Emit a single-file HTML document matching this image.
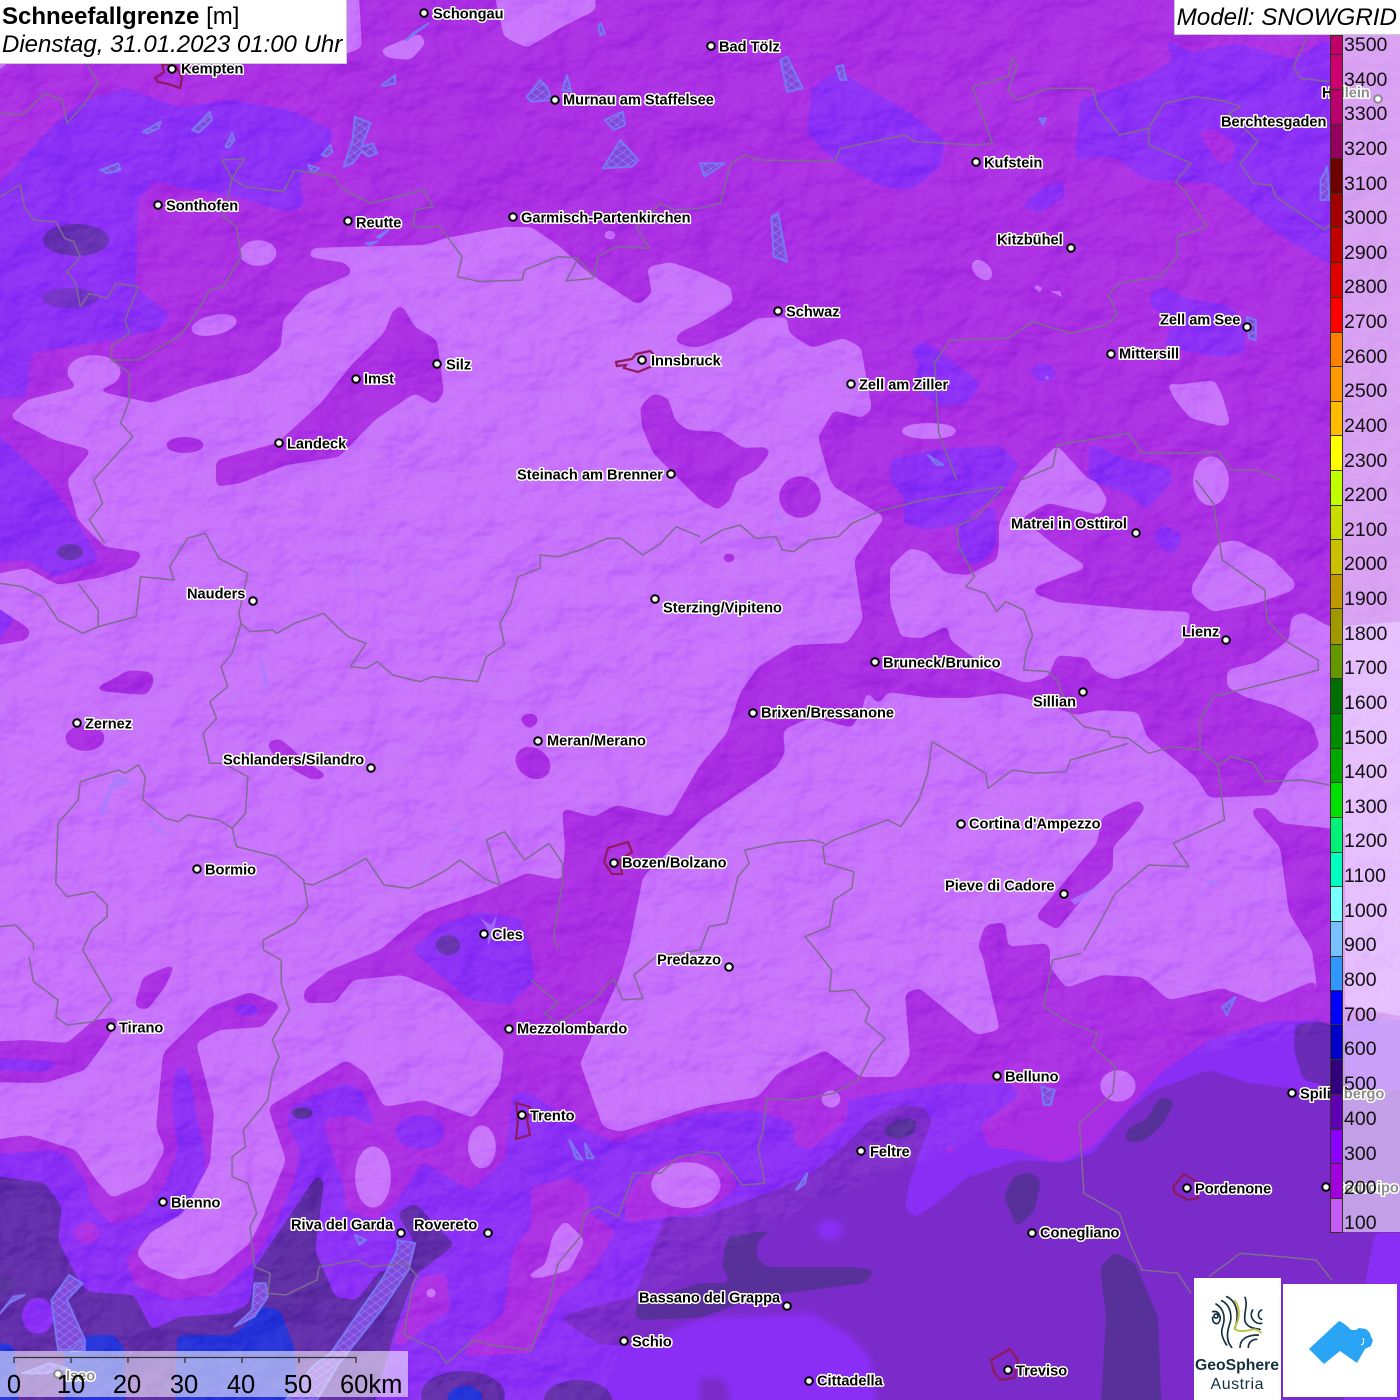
<!DOCTYPE html>
<html><head><meta charset="utf-8"><title>Schneefallgrenze</title>
<style>
html,body{margin:0;padding:0;background:#a92de3}
#w{position:relative;width:1400px;height:1400px;overflow:hidden;font-family:"Liberation Sans",sans-serif}
svg{position:absolute;left:0;top:0}
.c text{font:bold 14.6px "Liberation Sans",sans-serif;fill:#000;stroke:#fff;stroke-width:3px;paint-order:stroke;stroke-linejoin:round}
.d circle{fill:#fff;stroke:#000;stroke-width:2}
.b polyline{fill:none;stroke:#7d6d90;stroke-width:1.5;vector-effect:non-scaling-stroke;stroke-linejoin:round}
.k polygon{fill:url(#h);stroke:#7a78f2;stroke-width:2;vector-effect:non-scaling-stroke;stroke-linejoin:round}
.r polyline,.r polygon{fill:none;stroke:#8f1a5e;stroke-width:2.2;stroke-linejoin:miter}
.leg{position:absolute;left:1344px;font-size:19.5px;line-height:22px;color:#111;height:22px}
.cell{position:absolute;left:1330px;width:13px;box-sizing:border-box;border:1px solid #332;border-bottom:0}
.hd{position:absolute;background:#fff;color:#000;white-space:nowrap}
.sc{position:absolute;top:1370px;font-size:25.5px;line-height:30px;color:#000;transform:translateX(-50%)}
</style></head><body><div id="w">
<svg width="1400" height="1400" viewBox="0 0 1400 1400">
<defs>
<pattern id="h" width="17" height="17" patternUnits="userSpaceOnUse" patternTransform="rotate(45)"><rect width="17" height="17" fill="#7f4bdc"/><path d="M0 0H17M0 0V17" stroke="#b9a2ff" stroke-width="2"/></pattern>
<filter id="t" x="0" y="0" width="1" height="1" color-interpolation-filters="sRGB"><feTurbulence type="fractalNoise" baseFrequency=".016 .022" numOctaves="4" seed="7"/><feDiffuseLighting surfaceScale="11" diffuseConstant=".66" lighting-color="#fff"><feDistantLight azimuth="225" elevation="60"/></feDiffuseLighting></filter>
<filter id="s" filterUnits="userSpaceOnUse" x="-30" y="-30" width="1460" height="1460" color-interpolation-filters="sRGB"><feGaussianBlur stdDeviation="3.5"/><feComponentTransfer><feFuncA type="linear" slope="16" intercept="-7.5"/></feComponentTransfer></filter>
<clipPath id="cp"><polygon points="0,0 1400,0 1400,1020 1160,1060 1000,1130 800,1210 640,1300 600,1400 0,1400"/></clipPath>
</defs>
<rect width="1400" height="1400" fill="#a92de3"/>

<!-- blue-purple areas -->
<g fill="#8a2ef5" filter="url(#s)">
<polygon points="-20,205 0,183 45,133 80,103 125,88 179,107 232,100 290,110 333,130 330,150 308,170 300,177 304,207 286,212 237,197 179,187 156,180 138,200 136,287 172,317 156,330 112,340 31,353 27,397 -20,400"/>
<polygon points="-20,420 0,437 47,480 74,517 100,560 54,577 27,560 -20,563"/>
<polygon points="-20,590 0,600 14,620 0,640 -20,645"/>
<polygon points="812,87 838,70 865,87 910,113 945,140 941,167 910,190 883,187 834,160 807,133"/>
<polygon points="1164,37 1191,53 1236,43 1294,60 1330,37 1345,273 1276,233 1236,200 1213,183 1146,180 1115,157 1075,160 1080,100 1146,77 1173,60"/>
<polygon points="1021,207 1039,190 1062,180 1066,197 1039,213"/>
<polygon points="1149,293 1164,287 1191,300 1227,305 1245,320 1245,353 1218,357 1164,347 1173,320 1151,307"/>
<polygon points="910,350 923,340 941,353 981,383 968,403 941,407 914,387 919,363"/>
<polygon points="1028,370 1044,362 1057,370 1053,380 1039,382"/>
<polygon points="890,460 930,450 1000,445 1020,465 1000,495 960,520 958,555 975,565 990,555 997,540 995,505 980,515 955,525 925,530 903,523 905,500 890,480"/>
<polygon points="1089,443 1129,460 1169,467 1173,480 1147,510 1130,495 1089,480"/>
<polygon points="1153,537 1164,523 1184,537 1173,555 1160,548"/>
<polygon points="411,950 440,925 480,912 520,918 531,950 535,980 510,1005 470,1000 440,975"/>
<polygon points="-20,1057 40,1060 60,1063 45,1072 -20,1070"/>
<ellipse cx="247" cy="1010" rx="13" ry="6"/>
<polygon points="-20,1155 50,1150 67,1155 85,1180 92,1205 112,1225 140,1215 165,1185 178,1150 172,1110 175,1070 183,1063 192,1085 197,1120 205,1150 205,1175 185,1215 145,1240 125,1260 135,1285 170,1300 215,1295 250,1265 270,1235 295,1180 300,1150 287,1125 290,1107 344,1083 362,1090 380,1135 420,1160 470,1190 505,1160 513,1093 529,1092 580,1127 616,1143 700,1113 754,1110 800,1125 848,1100 900,1090 950,1083 1010,1083 1020,1095 980,1125 987,1147 1015,1150 1057,1163 1093,1147 1124,1113 1164,1070 1210,1040 1270,1022 1330,1020 1420,1020 1420,1420 -20,1420"/>
</g>
<g fill="#a92de3" filter="url(#s)">
<polygon points="1198,133 1213,128 1236,143 1231,163 1218,163"/>
<polygon points="324,1120 350,1115 370,1125 385,1107 424,1100 473,1120 505,1110 505,1160 470,1190 450,1160 420,1165 395,1205 375,1220 345,1210 345,1190 325,1130"/>
<polygon points="531,1187 571,1177 589,1190 589,1213 616,1230 594,1270 558,1300 531,1353 464,1357 469,1340 504,1313 513,1250 531,1227"/>
<polygon points="625,1200 638,1177 670,1160 700,1153 727,1163 738,1187 722,1200 700,1213 625,1223"/>
<polygon points="393,1343 420,1277 446,1273 451,1310 424,1327 402,1347"/>
<polygon points="794,1097 848,1090 847,1120 810,1150 794,1145"/>
<circle cx="950" cy="1150" r="5"/>
<ellipse cx="87" cy="1233" rx="13" ry="11"/>
</g>
<ellipse cx="420" cy="1132" rx="24" ry="17" fill="#8a2ef5"/>

<!-- plain -->
<g filter="url(#s)">
<polygon fill="#7b2bc9" points="1420,1090 1305,1090 1249,1083 1209,1070 1155,1090 1129,1110 1093,1153 1062,1163 1021,1160 968,1177 937,1203 914,1218 905,1207 910,1180 932,1120 923,1107 901,1105 870,1120 847,1143 812,1173 776,1190 700,1217 665,1217 634,1297 607,1303 558,1317 600,1345 640,1345 647,1420 1340,1420 1365,1285 1375,1233 1420,1233"/>
<polygon fill="#8a2ef5" points="640,1345 700,1318 812,1313 847,1333 870,1357 879,1420 647,1420"/>
<polygon fill="#7b2bc9" points="700,1377 725,1380 735,1420 700,1420"/>
<polygon fill="#6a2cb6" points="1295,1025 1330,1020 1345,1030 1345,1090 1303,1080 1294,1050"/>
<ellipse cx="830" cy="1230" rx="13" ry="10" fill="#8a2ef5"/>
</g>

<!-- dark -->
<g filter="url(#s)">
<polygon fill="#5f2ba8" points="-20,1177 2,1177 45,1183 62,1207 58,1240 80,1283 89,1292 134,1295 152,1330 179,1317 232,1313 250,1303 255,1267 317,1175 324,1183 315,1250 335,1297 357,1300 379,1272 400,1267 415,1243 397,1213 415,1203 455,1245 415,1275 395,1330 370,1420 -20,1420"/>
<polygon fill="#5a2aa0" points="270,1267 320,1175 324,1183 315,1250 335,1297 300,1305 262,1306"/>
</g>
<g fill="#57309a" filter="url(#s)">
<polygon points="880,1132 896,1120 917,1118 915,1133 897,1140"/>
<polygon points="1124,1140 1129,1127 1146,1120 1160,1097 1175,1100 1164,1123 1146,1140 1133,1143"/>
<polygon points="1004,1197 1013,1177 1030,1172 1041,1180 1035,1210 1017,1228"/>
<polygon points="1100,1267 1115,1252 1135,1263 1158,1317 1162,1420 1100,1420 1106,1317"/>
<polygon points="636,1303 700,1283 731,1283 722,1267 727,1237 780,1228 758,1240 756,1257 767,1267 852,1267 876,1270 865,1283 758,1297 700,1318 636,1320"/>
<ellipse cx="302" cy="1113" rx="12" ry="6"/>
<ellipse cx="4" cy="1285" rx="10" ry="9"/>
</g>
<g fill="#57309a">
<ellipse cx="76" cy="240" rx="33" ry="16" opacity=".75"/>
<ellipse cx="70" cy="298" rx="28" ry="10" opacity=".5"/>
<ellipse cx="70" cy="552" rx="13" ry="8" opacity=".8"/>
<ellipse cx="448" cy="945" rx="12" ry="10" opacity=".8"/>
</g>
<ellipse cx="463" cy="1395" rx="42" ry="24" fill="#5f2ba8"/>
<ellipse cx="465" cy="1398" rx="17" ry="12" fill="#1f2fd8"/>
<ellipse cx="578" cy="1400" rx="34" ry="20" fill="#5f2ba8"/>
<ellipse cx="38" cy="1316" rx="16" ry="18" fill="#8a2ef5"/>
<g fill="#2330d8" filter="url(#s)">
<polygon points="175,1420 177,1335 235,1335 262,1306 280,1310 295,1350 297,1420"/>
<polygon points="65,1345 90,1335 115,1335 125,1350 125,1420 65,1420"/>
<polygon points="-20,1340 14,1345 20,1420 -20,1420"/>
</g>

<!-- main light -->
<g fill="#c670fb" filter="url(#s)">
<polygon points="9,417 27,400 78,387 152,403 192,388 250,373 281,347 283,320 308,293 353,273 346,263 308,257 312,248 344,247 424,245 446,238 504,227 531,227 558,245 589,273 638,305 652,293 647,267 670,262 700,272 731,287 733,303 700,323 680,332 674,342 690,347 700,347 730,335 758,318 787,317 789,333 812,348 843,338 861,347 872,410 861,418 834,410 818,437 830,480 834,487 885,517 854,560 863,620 847,643 794,645 758,667 740,693 727,733 700,765 670,817 616,805 594,817 562,808 565,847 562,880 527,873 482,893 424,913 380,950 330,970 304,990 304,1003 335,1003 353,980 402,975 446,993 504,1050 500,1083 473,1118 424,1100 384,1107 366,1073 346,1060 268,1107 286,1160 263,1217 250,1243 214,1273 179,1280 147,1267 136,1253 150,1233 183,1213 210,1163 214,1113 196,1043 219,1030 263,1027 281,1005 250,992 210,1007 163,1053 156,1127 165,1150 147,1183 112,1198 96,1180 76,1150 27,1135 -20,1142 -20,1082 45,1083 85,1070 107,1040 120,1017 94,1020 67,1043 27,1040 -20,1042 -20,648 27,640 31,630 -20,596 -20,577 27,568 58,585 103,577 134,567 143,552 105,547 78,520 67,480 92,450 54,440"/>
<polygon points="700,820 776,768 785,753 783,730 812,717 852,728 862,710 867,690 878,705 888,692 932,698 968,698 1004,693 1044,703 1075,715 1102,710 1138,712 1147,737 1196,777 1209,798 1276,795 1289,770 1320,747 1312,723 1280,707 1245,697 1227,687 1227,670 1258,662 1289,640 1291,617 1303,612 1330,627 1420,620 1420,1020 1316,1000 1316,980 1262,1003 1222,988 1169,1000 1142,977 1102,975 1066,988 1050,967 1050,950 1048,943 1008,947 1005,922 985,925 977,950 981,950 1000,1030 977,1035 919,988 905,993 910,1057 896,1077 861,1077 825,1050 778,1073 758,1097 700,1107 620,1132 603,1127 580,1063 620,977 629,947 643,877"/>
<polygon points="890,567 910,548 928,553 945,573 968,575 997,560 999,543 999,523 1021,480 1057,445 1089,480 1095,480 1108,500 1100,515 1048,503 1021,518 1057,547 1088,567 1035,587 1033,593 1057,602 1146,610 1191,612 1184,643 1146,670 1115,680 1093,670 1088,658 1057,655 1048,677 1026,683 990,670 950,640 948,625 923,638 901,637 890,603"/>
<polygon points="1191,587 1218,543 1236,540 1271,557 1296,583 1294,590 1258,603 1213,612 1193,597"/>
<polygon points="491,-20 504,37 527,48 562,27 596,10 594,-20"/>
<polygon points="379,50 420,33 426,43 411,60 388,58"/>
<polygon points="340,-20 358,-20 362,48 340,56"/>
<polygon points="-20,60 14,60 -20,82"/>
<polygon points="1165,380 1175,385 1215,380 1222,395 1231,425 1220,426 1190,418 1175,400"/>
<polygon points="522,1278 545,1265 553,1235 565,1220 580,1235 585,1240 570,1270 540,1278"/>
<ellipse cx="258" cy="253" rx="19" ry="13"/>
<ellipse cx="214" cy="325" rx="24" ry="10" transform="rotate(-12 214 325)"/>
<ellipse cx="94" cy="372" rx="27" ry="17"/>
<ellipse cx="610" cy="235" rx="7" ry="5"/>
<ellipse cx="982" cy="270" rx="13" ry="8" transform="rotate(45 982 270)"/>
<ellipse cx="929" cy="431" rx="29" ry="8"/>
<ellipse cx="1211" cy="481" rx="18" ry="25"/>
<ellipse cx="482" cy="1147" rx="14" ry="22"/>
<ellipse cx="373" cy="1177" rx="18" ry="31"/>
<ellipse cx="686" cy="1185" rx="35" ry="23"/>
<ellipse cx="831" cy="1099" rx="10" ry="9"/>
<ellipse cx="1118" cy="1086" rx="18" ry="16"/>
</g>
<g fill="#c670fb">
<circle cx="431" cy="1293" r="4.5"/>
<polygon points="1037,285 1042,288 1040,292 1034,288"/>
<polygon points="1050,291 1060,291 1062,297"/>
</g>
<!-- mid-tone over light -->
<g fill="#a92de3" filter="url(#s)">
<polygon points="402,305 415,327 437,340 444,393 435,405 415,393 375,420 339,457 286,465 241,483 216,487 216,460 277,443 321,403 353,363 384,333 393,310"/>
<ellipse cx="185" cy="445" rx="20" ry="8"/>
<polygon points="640,407 653,393 668,398 675,420 687,430 720,432 743,448 768,447 770,453 757,470 737,480 730,500 718,510 700,500 683,483 653,453 642,427"/>
<ellipse cx="800" cy="497" rx="21" ry="21" transform="rotate(30 800 497)"/>
<ellipse cx="729" cy="558" rx="7" ry="5"/>
<polygon points="92,690 129,670 152,672 154,683 147,695 120,693"/>
<ellipse cx="85" cy="738" rx="20" ry="13"/>
<polygon points="266,743 279,738 290,747 308,763 330,777 312,780 299,773 277,760"/>
<polygon points="518,718 529,713 538,715 538,723 529,730"/>
<ellipse cx="533" cy="763" rx="19" ry="15" transform="rotate(35 533 763)"/>
<polygon points="134,1007 143,977 176,963 165,987 147,1010"/>
<polygon points="1035,917 1097,843 1102,817 1138,800 1146,807 1129,830 1113,847 1113,870 1084,897 1057,930"/>
<polygon points="1251,808 1267,808 1280,823 1345,830 1345,1030 1316,1020 1316,980 1312,950 1289,913 1280,847 1254,817"/>
</g>

<!-- hillshade -->
<rect width="1400" height="1400" filter="url(#t)" clip-path="url(#cp)" style="mix-blend-mode:soft-light" opacity=".5"/>

<!-- lakes -->
<g class="k" transform="scale(.4464 .3333)">
<polygon points="320,395 360,365 355,385 330,400"/><polygon points="430,390 470,335 475,360 445,398"/><polygon points="505,440 520,400 525,420 512,443"/><polygon points="225,510 265,490 270,510 240,520"/><polygon points="855,255 885,225 885,250 860,258"/><polygon points="720,465 740,435 745,455 730,470"/><polygon points="690,495 715,505 700,520"/>
<polygon points="770,500 790,420 795,350 830,370 810,440 835,430 845,460 825,470 810,455 790,490"/>
<polygon points="1180,290 1210,240 1225,260 1235,300 1190,305"/><polygon points="1260,270 1270,225 1280,275"/><polygon points="1355,360 1395,335 1400,375 1375,390"/><polygon points="1350,505 1390,420 1430,480 1415,500"/><polygon points="1340,80 1345,70 1355,100 1345,105"/><polygon points="910,120 960,70 925,100"/>
<polygon points="820,730 845,725 830,735"/><polygon points="845,710 870,690 850,715"/>
</g>
<g class="k" transform="translate(700 0) scale(.4464 .3333)">
<polygon points="180,180 195,170 230,265 195,275"/><polygon points="305,200 320,195 328,240 315,240"/><polygon points="160,650 175,640 195,785 165,770"/><polygon points="1390,540 1405,500 1410,600 1390,600"/><polygon points="760,355 775,355 768,375"/><polygon points="0,490 55,490 10,530"/><polygon points="1225,950 1245,960 1245,1020 1230,1015"/><polygon points="510,1365 545,1395 530,1395"/>
</g>
<g class="k" transform="translate(0 950) scale(.4464 .3333)">
<polygon points="115,1050 155,975 185,1000 150,1050 190,1170 190,1200 130,1200"/>
<polygon points="180,1170 190,1200 160,1205"/>
<polygon points="525,1130 565,1080 570,1000 595,1000 600,1040 570,1100"/>
<polygon points="640,1350 700,1250 740,1210 860,980 890,900 890,870 930,880 915,960 860,1070 760,1240 710,1350"/>
<polygon points="1275,570 1305,630 1290,625"/><polygon points="1310,580 1330,625 1315,625"/>
<polygon points="0,1090 30,1040 55,1035 20,1060"/>
<polygon points="795,855 820,870 805,885"/>
<polygon points="50,1270 110,1240 150,1255 100,1270"/>
</g>
<g class="k" transform="translate(700 950) scale(.4464 .3333)">
<polygon points="765,410 795,420 785,465 770,465"/><polygon points="215,720 240,670 235,700"/><polygon points="1170,170 1200,140 1180,195"/>
</g>
<g fill="#a97cff" opacity=".75">
<polygon points="258,645 268,680 266,695 261,670"/><polygon points="355,560 358,560 356,590"/><polygon points="98,813 116,773 134,782 112,790 105,815"/><polygon points="145,818 174,838 156,830"/><polygon points="451,830 464,825 455,833"/><polygon points="1110,880 1096,890 1075,905 1070,900"/><polygon points="480,918 491,925 497,915 493,935 488,945 487,928"/><polygon points="775,505 785,525 777,520"/><polygon points="1203,880 1222,882 1212,886"/><polygon points="1045,375 1050,378 1046,380"/>
</g>

<!-- borders -->
<g class="b" transform="scale(.4464 .3333)">
<polyline points="0,590 45,555 55,620 75,660 125,665 145,715 165,725 180,770 150,815 170,850 180,920 200,880 240,895 260,850 310,860 280,960 290,1000 250,1040 250,1080 310,1080 400,1010 430,960 470,870 500,860 540,770 530,680 500,650 520,535 497,480 548,475 520,535 550,560 635,575 660,510 750,530 760,560 830,610 950,570 970,620 930,630 925,680 985,680 1035,770 1025,830 1075,845 1170,840 1175,810 1250,770 1295,775 1330,830 1340,770 1380,740 1455,745 1425,680 1480,610 1510,630 1568,625"/>
<polyline points="1295,775 1268,843 1330,835"/>
<polyline points="250,1080 290,1120 290,1200 270,1270 298,1310 250,1380 210,1440"/>
<polyline points="195,195 220,250 190,310 150,370 140,300 100,280 50,345 0,340"/>
</g>
<g class="b" transform="translate(700 0) scale(.4464 .3333)">
<polyline points="0,625 45,610 70,490 100,465 130,480 300,485 315,445 460,405 480,425 620,435 655,430 610,260 690,230 700,175 710,200 690,270 710,300 780,265 880,265 890,320 940,405 1005,385 1040,310 1110,290 1180,305 1210,320 1185,340 1250,425 1210,490 1240,550 1280,555 1290,590 1400,690 1410,675"/>
<polyline points="1005,385 1005,435 1100,490 1065,545 1090,580 1135,680 1070,710 1070,770 1030,830 940,850 915,885 935,945 910,975 830,1000 745,965 690,1015 560,1020 525,1090 535,1300 575,1440"/>
<polyline points="1360,110 1330,200 1345,235 1410,245"/>
<polyline points="800,1335 790,1400 720,1440"/><polyline points="800,1335 960,1300 990,1360 1100,1360 1160,1355 1190,1410 1250,1410 1300,1440"/>
</g>
<g class="b" transform="translate(700 480) scale(.4464 .3333)">
<polyline points="680,20 620,110 575,140 580,200 615,290 595,320 640,340 665,395 685,365 725,390 745,465 730,520 725,570 780,575 800,600 830,700 860,740 915,755 920,770 960,775 1005,820 1060,800 1120,810 1160,855 1190,830 1240,850 1265,905 1350,900 1410,915"/>
<polyline points="680,20 500,60 410,90 340,130 310,170 245,180 210,215 185,210 170,170 125,175 90,135 50,150 0,190"/>
<polyline points="1120,810 1120,720 1150,650 1240,620 1330,590 1385,570 1385,540 1320,490 1270,420 1265,330 1170,240 1150,70 1110,0"/>
<polyline points="1160,855 1175,1020 1060,1090 1095,1160 1005,1155 930,1240 895,1330 860,1410"/>
<polyline points="520,785 510,880 490,960 450,1040 420,1020 300,1080 275,1100 280,1150 345,1175 340,1225 300,1260 290,1340 235,1370 260,1410"/>
<polyline points="520,785 640,880 645,925 700,870 750,880 820,875 830,840 960,790"/>
<polyline points="100,1110 170,1090 250,1080 280,1090"/>
<polyline points="100,1110 110,1150 85,1190 60,1330 20,1340 0,1410"/>
</g>
<g class="b" transform="translate(0 480) scale(.4464 .3333)">
<polyline points="1568,170 1515,140 1480,190 1440,225 1415,200 1390,175 1360,175 1300,210 1250,230 1210,225 1210,265 1160,290 1145,370 1120,430 1130,495 1090,530 1070,605 970,590 940,605 880,585 845,545 820,565 785,560 820,490 780,470 755,440 725,400 660,430 620,460 610,450 560,455 540,430 535,400 555,280 490,235 460,160 420,175 380,260 390,300 315,290 305,410 220,440 185,460 130,420 95,350 50,320 0,310"/>
<polyline points="175,310 220,390 220,440"/>
<polyline points="540,430 520,520 495,560 510,620 470,665 485,715 455,760 470,850 500,850 555,890 550,1000 520,1045 530,1100 620,1130 680,1200 690,1280 660,1330 590,1380 590,1410"/>
<polyline points="520,1045 490,1020 420,1005 400,1025 370,1015 320,960 325,890 310,855 280,880 265,870 180,905 175,960 130,1030 125,1210 150,1250 210,1235 240,1275 240,1310 205,1350 185,1410"/>
<polyline points="680,1210 700,1215 760,1180 820,1135 860,1215 915,1225 945,1210 1000,1170 1030,1140 1090,1200 1120,1215 1090,1080 1130,1055 1175,1140 1230,1090 1260,1150 1260,1210 1240,1370 1250,1410"/>
<polyline points="210,0 230,70 200,120 235,190"/>
<polyline points="0,1340 35,1335 75,1390 75,1410"/>
</g>
<g class="b" transform="translate(0 950) scale(.4464 .3333)">
<polyline points="185,0 250,150 210,215 150,225 125,200 130,150 75,95 65,20"/>
<polyline points="590,0 630,30 630,100 648,180 610,270 625,320 610,370 600,450 545,540 550,590 520,620 520,680 555,700 575,790 560,830 570,950 605,970 600,1030 640,1035 710,990 715,950 800,930 830,950 910,940 935,980 925,1000 905,1155 980,1200 1000,1240 1060,1170 1100,1185 1190,1200 1230,1050 1250,940 1300,860 1310,790 1340,770 1385,800 1420,670 1480,670 1520,620 1568,610"/>
<polyline points="1190,90 1250,160 1220,190 1250,220 1330,150 1375,85 1395,150 1440,145 1420,75 1470,20 1568,0"/>
</g>
<g class="b" transform="translate(700 950) scale(.4464 .3333)">
<polyline points="260,0 295,60 290,125 345,120 380,175 370,215 415,265 385,310 355,390 300,430 215,450 150,445 140,550 130,590 145,700 95,705 40,610 0,605"/>
<polyline points="855,10 790,30 770,170 830,220 890,250 880,290 930,350 925,430 850,520 860,730 940,790 960,870 990,960 1070,970 1100,1030"/>
<polyline points="1140,980 1210,910 1300,920 1380,930 1415,990"/>
</g>

<!-- city outlines -->
<g class="r">
<polygon points="155,78 164,72 162,64 176,66 182,78 180,88 168,84 158,82"/>
<polygon points="616,362 632,359 636,354 650,351 662,362 638,372 624,368 626,365 617,366"/>
<polygon points="608,848 628,842 632,852 620,860 622,874 612,874 604,862"/>
<polygon points="516,1103 530,1107 527,1120 530,1135 516,1139 518,1120"/>
<polygon points="1173,1187 1184,1174 1197,1182 1198,1198 1188,1200 1175,1193"/>
<polygon points="991,1360 1010,1349 1018,1360 1014,1378 1000,1380 994,1372"/>
</g>

<!-- city dots -->
<g class="d">
<circle cx="424" cy="13" r="3.8"/><circle cx="711" cy="46" r="3.8"/><circle cx="172" cy="69" r="3.8"/><circle cx="555" cy="100" r="3.8"/><circle cx="976" cy="162" r="3.8"/><circle cx="158" cy="205" r="3.8"/><circle cx="348" cy="221" r="3.8"/><circle cx="513" cy="217" r="3.8"/><circle cx="1071" cy="248" r="3.8"/><circle cx="778" cy="311" r="3.8"/><circle cx="1247" cy="327" r="3.8"/><circle cx="1111" cy="354" r="3.8"/><circle cx="437" cy="364" r="3.8"/><circle cx="356" cy="379" r="3.8"/><circle cx="642" cy="360" r="3.8"/><circle cx="851" cy="384" r="3.8"/><circle cx="279" cy="443" r="3.8"/><circle cx="671" cy="474" r="3.8"/><circle cx="1136" cy="533" r="3.8"/><circle cx="253" cy="601" r="3.8"/><circle cx="655" cy="599" r="3.8"/><circle cx="1226" cy="640" r="3.8"/><circle cx="875" cy="662" r="3.8"/><circle cx="1083" cy="692" r="3.8"/><circle cx="753" cy="713" r="3.8"/><circle cx="77" cy="723" r="3.8"/><circle cx="538" cy="741" r="3.8"/><circle cx="371" cy="768" r="3.8"/><circle cx="961" cy="824" r="3.8"/><circle cx="614" cy="863" r="3.8"/><circle cx="197" cy="869" r="3.8"/><circle cx="1064" cy="894" r="3.8"/><circle cx="484" cy="934" r="3.8"/><circle cx="729" cy="967" r="3.8"/><circle cx="111" cy="1027" r="3.8"/><circle cx="509" cy="1029" r="3.8"/><circle cx="997" cy="1076" r="3.8"/><circle cx="1292" cy="1093" r="3.8"/><circle cx="522" cy="1115" r="3.8"/><circle cx="861" cy="1151" r="3.8"/><circle cx="1187" cy="1188" r="3.8"/><circle cx="1326" cy="1187" r="3.8"/><circle cx="163" cy="1202" r="3.8"/><circle cx="401" cy="1233" r="3.8"/><circle cx="488" cy="1233" r="3.8"/><circle cx="1032" cy="1233" r="3.8"/><circle cx="787" cy="1306" r="3.8"/><circle cx="624" cy="1341" r="3.8"/><circle cx="1008" cy="1370" r="3.8"/><circle cx="809" cy="1381" r="3.8"/><circle cx="58" cy="1374" r="3.8"/><circle cx="1378" cy="99" r="3.8"/>
</g>
<!-- city names -->
<g class="c" transform="translate(0 .7)">
<text x="433" y="18">Schongau</text><text x="719" y="51">Bad Tölz</text><text x="181" y="73">Kempten</text><text x="563" y="104">Murnau am Staffelsee</text><text x="984" y="167">Kufstein</text><text x="1322" y="97">Hallein</text><text x="1221" y="126">Berchtesgaden</text><text x="166" y="210">Sonthofen</text><text x="356" y="227">Reutte</text><text x="521" y="222">Garmisch-Partenkirchen</text><text x="997" y="244">Kitzbühel</text><text x="786" y="316">Schwaz</text><text x="1160" y="324">Zell am See</text><text x="1119" y="358">Mittersill</text><text x="446" y="369">Silz</text><text x="364" y="383">Imst</text><text x="651" y="365">Innsbruck</text><text x="859" y="389">Zell am Ziller</text><text x="287" y="448">Landeck</text><text x="517" y="479">Steinach am Brenner</text><text x="1011" y="528">Matrei in Osttirol</text><text x="187" y="598">Nauders</text><text x="663" y="612">Sterzing/Vipiteno</text><text x="1182" y="636">Lienz</text><text x="883" y="667">Bruneck/Brunico</text><text x="1033" y="706">Sillian</text><text x="761" y="717">Brixen/Bressanone</text><text x="85" y="728">Zernez</text><text x="547" y="745">Meran/Merano</text><text x="223" y="764">Schlanders/Silandro</text><text x="969" y="828">Cortina d'Ampezzo</text><text x="622" y="867">Bozen/Bolzano</text><text x="205" y="874">Bormio</text><text x="945" y="890">Pieve di Cadore</text><text x="492" y="939">Cles</text><text x="657" y="964">Predazzo</text><text x="119" y="1032">Tirano</text><text x="517" y="1033">Mezzolombardo</text><text x="1005" y="1081">Belluno</text><text x="1300" y="1098">Spilimbergo</text><text x="530" y="1120">Trento</text><text x="870" y="1156">Feltre</text><text x="1195" y="1193">Pordenone</text><text x="1334" y="1192">Codroipo</text><text x="171" y="1207">Bienno</text><text x="291" y="1229">Riva del Garda</text><text x="414" y="1229">Rovereto</text><text x="1040" y="1237">Conegliano</text><text x="639" y="1302">Bassano del Grappa</text><text x="632" y="1346">Schio</text><text x="1016" y="1375">Treviso</text><text x="817" y="1385">Cittadella</text><text x="66" y="1380">Iseo</text>
</g>
</svg>

<!-- legend background -->
<div style="position:absolute;left:1343px;top:35px;width:57px;height:1197px;background:rgba(255,255,255,.55)"></div>
<div class="cell" style="top:35px;height:19px;background:#c0006a"></div>
<div class="cell" style="top:54px;height:35px;background:#cc0070"></div>
<div class="cell" style="top:89px;height:35px;background:#b8006a"></div>
<div class="cell" style="top:124px;height:34px;background:#940060"></div>
<div class="cell" style="top:158px;height:35px;background:#6e0000"></div>
<div class="cell" style="top:193px;height:34px;background:#a00000"></div>
<div class="cell" style="top:227px;height:35px;background:#c00000"></div>
<div class="cell" style="top:262px;height:35px;background:#e00000"></div>
<div class="cell" style="top:297px;height:35px;background:#ff0000"></div>
<div class="cell" style="top:332px;height:34px;background:#ff8000"></div>
<div class="cell" style="top:366px;height:35px;background:#ff9900"></div>
<div class="cell" style="top:401px;height:34px;background:#ffbb00"></div>
<div class="cell" style="top:435px;height:35px;background:#ffff00"></div>
<div class="cell" style="top:470px;height:35px;background:#bfff00"></div>
<div class="cell" style="top:505px;height:34px;background:#c8dc00"></div>
<div class="cell" style="top:539px;height:35px;background:#c8c000"></div>
<div class="cell" style="top:574px;height:34px;background:#c09800"></div>
<div class="cell" style="top:608px;height:36px;background:#a09800"></div>
<div class="cell" style="top:644px;height:34px;background:#649600"></div>
<div class="cell" style="top:678px;height:35px;background:#006e00"></div>
<div class="cell" style="top:713px;height:35px;background:#008c00"></div>
<div class="cell" style="top:748px;height:34px;background:#00a800"></div>
<div class="cell" style="top:782px;height:35px;background:#00e000"></div>
<div class="cell" style="top:817px;height:35px;background:#00f078"></div>
<div class="cell" style="top:852px;height:34px;background:#00ffc0"></div>
<div class="cell" style="top:886px;height:35px;background:#78ffff"></div>
<div class="cell" style="top:921px;height:35px;background:#78c0ff"></div>
<div class="cell" style="top:956px;height:34px;background:#3296ff"></div>
<div class="cell" style="top:990px;height:34px;background:#0000ff"></div>
<div class="cell" style="top:1024px;height:35px;background:#0000c8"></div>
<div class="cell" style="top:1059px;height:35px;background:#32007d"></div>
<div class="cell" style="top:1094px;height:35px;background:#5f00b4"></div>
<div class="cell" style="top:1129px;height:34px;background:#8c00ff"></div>
<div class="cell" style="top:1163px;height:35px;background:#a000dc"></div>
<div class="cell" style="top:1198px;height:35px;background:#c45cf5;border-bottom:1px solid #332"></div>
<div class="leg" style="top:34px">3500</div><div class="leg" style="top:69px">3400</div><div class="leg" style="top:103px">3300</div><div class="leg" style="top:138px">3200</div><div class="leg" style="top:173px">3100</div><div class="leg" style="top:207px">3000</div><div class="leg" style="top:242px">2900</div><div class="leg" style="top:276px">2800</div><div class="leg" style="top:311px">2700</div><div class="leg" style="top:346px">2600</div><div class="leg" style="top:380px">2500</div><div class="leg" style="top:415px">2400</div><div class="leg" style="top:450px">2300</div><div class="leg" style="top:484px">2200</div><div class="leg" style="top:519px">2100</div><div class="leg" style="top:553px">2000</div><div class="leg" style="top:588px">1900</div><div class="leg" style="top:623px">1800</div><div class="leg" style="top:657px">1700</div><div class="leg" style="top:692px">1600</div><div class="leg" style="top:727px">1500</div><div class="leg" style="top:761px">1400</div><div class="leg" style="top:796px">1300</div><div class="leg" style="top:830px">1200</div><div class="leg" style="top:865px">1100</div><div class="leg" style="top:900px">1000</div><div class="leg" style="top:934px">900</div><div class="leg" style="top:969px">800</div><div class="leg" style="top:1004px">700</div><div class="leg" style="top:1038px">600</div><div class="leg" style="top:1073px">500</div><div class="leg" style="top:1108px">400</div><div class="leg" style="top:1143px">300</div><div class="leg" style="top:1177px">200</div><div class="leg" style="top:1212px">100</div>

<!-- titles -->
<div class="hd" style="left:0;top:0;width:347px;height:64px;border-bottom:1px solid #ccc;border-right:1px solid #ccc;box-sizing:border-box">
<div style="position:absolute;left:2px;top:3px;font-size:24px;line-height:28px"><b>Schneefallgrenze</b> [m]</div>
<div style="position:absolute;left:2px;top:31px;font-size:24px;line-height:28px;font-style:italic">Dienstag, 31.01.2023 01:00 Uhr</div>
</div>
<div class="hd" style="left:1174px;top:0;width:226px;height:35px;box-sizing:border-box;border-left:1px solid #ccc;border-bottom:1px solid #ccc">
<div style="position:absolute;right:3px;top:4px;font-size:24.2px;line-height:28px;font-style:italic">Modell: SNOWGRID</div>
</div>

<!-- scale -->
<div style="position:absolute;left:0;top:1351px;width:408px;height:46px;background:rgba(255,255,255,.55)"></div>
<svg width="1400" height="1400" style="pointer-events:none"><path d="M14 1363V1357.5H356V1363M71 1357.5V1363M128 1357.5V1363M185 1357.5V1363M242 1357.5V1363M299 1357.5V1363" fill="none" stroke="#333" stroke-width="1.3"/></svg>
<div class="sc" style="left:14px">0</div><div class="sc" style="left:71px">10</div><div class="sc" style="left:127px">20</div><div class="sc" style="left:184px">30</div><div class="sc" style="left:241px">40</div><div class="sc" style="left:298px">50</div><div class="sc" style="left:340px;transform:none">60km</div>

<!-- logos -->
<div style="position:absolute;left:1194px;top:1278px;width:87px;height:122px;background:#fff"></div>
<div style="position:absolute;left:1283px;top:1284px;width:114px;height:113px;background:#fff"></div>
<svg width="1400" height="1400">
<g transform="translate(1180 1260) scale(.3333)" fill="none" stroke="#143040" stroke-width="5" stroke-linecap="round">
<path d="M125 122C152 135 158 170 148 195C140 220 140 245 155 262"/>
<path d="M140 110C172 125 178 165 165 205"/>
<path d="M108 132C130 145 138 170 128 200C120 220 130 240 140 255"/>
<path d="M98 155C115 150 125 170 118 185C110 198 96 188 98 172"/>
<circle cx="108" cy="168" r="6"/>
<path d="M195 112C205 135 190 160 195 185C205 205 225 205 240 208"/>
<path d="M218 150C205 170 225 195 245 190"/>
<path d="M245 150C232 155 232 175 245 178"/>
<path d="M180 262C180 235 205 225 235 225"/>
<path d="M205 262C205 245 220 238 230 238"/>
<path d="M165 122C185 150 175 185 165 200C158 215 190 215 212 210C225 205 235 210 243 218" stroke="#bcc54a" stroke-width="6"/>
</g>
<text x="1237" y="1370" text-anchor="middle" font-family="Liberation Sans" font-weight="bold" font-size="16" fill="#143040" textLength="84" lengthAdjust="spacingAndGlyphs">GeoSphere</text>
<text x="1237" y="1389" text-anchor="middle" font-family="Liberation Sans" font-size="16" fill="#143040" textLength="53">Austria</text>
<polygon fill="#2aa4f4" points="1309,1349 1339,1321 1343,1323 1347,1326 1351,1330 1356,1330 1359,1328 1366,1329 1370,1333 1371,1337 1373,1340 1371,1346 1365,1349 1357,1363 1340,1351 1324,1364"/>
<path d="M1363 1338q2 6 -2 7" fill="none" stroke="#fff" stroke-width="1"/>
</svg>
</div></body></html>
